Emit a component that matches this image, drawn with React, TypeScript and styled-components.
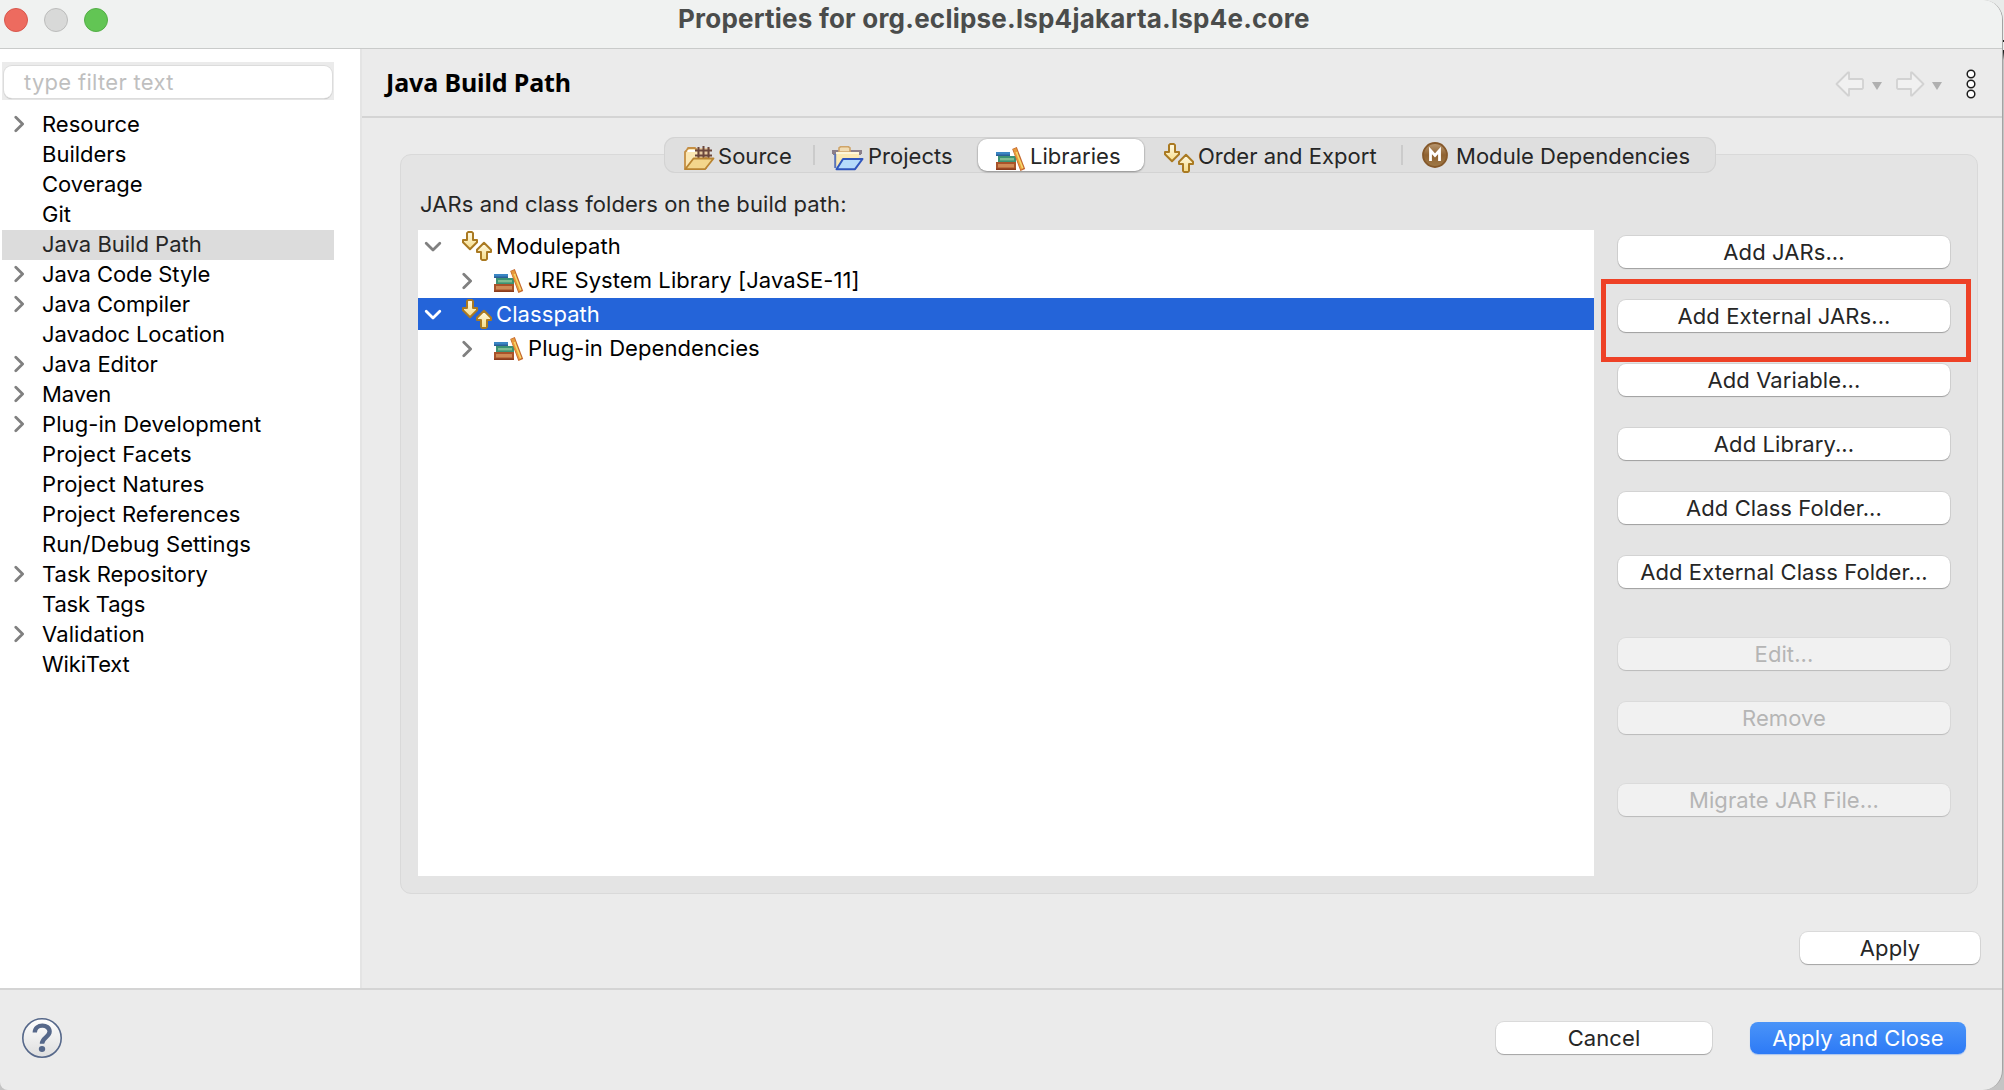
import React from "react";
import styled, { createGlobalStyle, css } from "styled-components";

const GlobalStyle = createGlobalStyle`
  *, *::before, *::after { box-sizing: border-box; }
  body { margin: 0; background: #c4c4c4; }
  svg { flex: none; display: block; }
`;

const Desktop = styled.div`
  width: 2004px;
  height: 1090px;
  overflow: hidden;
  background: linear-gradient(#e9ebea 0 40px, #222 40px 42px, #e9ebea 42px 50px, #222 50px 52px, #c4c4c4 60px);
  font-family: Inter, "Liberation Sans", sans-serif;
  font-size: 22px;
  line-height: 30px;
  letter-spacing: 0.08px;
  color: #262626;
`;

const Window = styled.div`
  width: 2003px;
  height: 1090px;
  display: flex;
  flex-direction: column;
  background: #ebebeb;
  border-right: 1px solid #a3a3a3;
  border-radius: 0 20px 20px 8px;
  overflow: hidden;
`;

const TitleBar = styled.header`
  flex: none;
  height: 49px;
  display: grid;
  grid-template-columns: 678px 1fr;
  background: #f0f2f1;
  border-bottom: 1px solid #c9cbca;
`;

const Lights = styled.div`
  display: flex;
  gap: 16px;
  padding: 8px 0 0 4px;
`;

const Light = styled.span<{ $fill: string; $rim: string }>`
  width: 24px;
  height: 24px;
  border-radius: 50%;
  background: ${(p) => p.$fill};
  border: 1px solid ${(p) => p.$rim};
`;

const Title = styled.h1`
  margin: 0;
  font-size: 26px;
  line-height: 38px;
  font-weight: 700;
  letter-spacing: 0.22px;
  color: #4a4c4b;
  white-space: nowrap;
`;

const Body = styled.div`
  flex: none;
  height: 939px;
  display: grid;
  grid-template-columns: 362px 1fr;
`;

const Sidebar = styled.nav`
  background: #fff;
  border-right: 2px solid #e4e4e4;
  padding: 13px 26px 0 2px;
`;

const FilterWrap = styled.div`
  height: 38px;
  padding: 4px 2px 2px;
  background: #ebebeb;
  margin-bottom: 10px;
`;

const Filter = styled.div`
  height: 32px;
  border-radius: 8px;
  background: #fff;
  box-shadow: 0 0 0 1px #dcdcdc, 0 1px 1px #9f9f9f;
  padding-left: 20px;
  line-height: 32px;
  letter-spacing: 0.3px;
  color: #bfbfbf;
`;

const NavRow = styled.div<{ $selected?: boolean }>`
  height: 30px;
  display: grid;
  grid-template: 28px / 40px 1fr;
  align-items: center;
  line-height: 28px;
  white-space: nowrap;
  color: ${(p) => (p.$selected ? "#262626" : "#000")};
  background: ${(p) => (p.$selected ? "#dcdcdc" : "transparent")};
`;

const NavLabel = styled.span<{ $tracking: number }>`
  letter-spacing: ${(p) => p.$tracking}px;
`;

const ChevronBox = styled.span`
  display: flex;
  align-items: center;
  padding-left: 12px;
`;

const Page = styled.main`
  display: flex;
  flex-direction: column;
`;

const PageHeader = styled.div`
  flex: none;
  height: 69px;
  display: flex;
  justify-content: space-between;
  padding: 0 26px 0 24px;
  border-bottom: 2px solid #d4d4d4;
`;

const PageTitle = styled.h2`
  margin: 0;
  font-family: "Noto Sans", "Open Sans", sans-serif;
  font-size: 25px;
  font-weight: 700;
  line-height: 66px;
  letter-spacing: -0.12px;
  color: #000;
`;

const Group = styled.section`
  flex: none;
  width: 1578px;
  height: 740px;
  margin: 36px 0 0 38px;
  background: #e4e4e4;
  border: 1px solid #d9d9d9;
  border-radius: 11px;
`;

const TabBar = styled.div`
  width: 1052px;
  height: 36px;
  margin: -18px 0 0 263px;
  display: grid;
  grid-template: 36px / 151px 163px 166px 259px 313px;
  background: #dfdfdf;
  border-radius: 11px;
  box-shadow: inset 0 0 0 1px #d3d3d3;
`;

const Tab = styled.div<{ $pad: number; $gap: number; $active?: boolean; $divider?: boolean }>`
  display: flex;
  align-items: center;
  gap: ${(p) => p.$gap}px;
  padding: 2px 0 0 ${(p) => p.$pad}px;
  white-space: nowrap;
  letter-spacing: 0.03px;
  color: #262626;
  ${(p) =>
    p.$divider &&
    css`
      background: linear-gradient(#cbcbcb, #cbcbcb) right 8px / 2px 20px no-repeat;
    `}
  ${(p) =>
    p.$active &&
    css`
      margin: 2px 0;
      background: #fff;
      border-radius: 9px;
      box-shadow: 0 0 1px 1px rgba(0, 0, 0, 0.08), 0 1px 2px rgba(0, 0, 0, 0.3);
    `}
`;

const TabIcon = styled.span<{ $top: number }>`
  align-self: flex-start;
  margin-top: ${(p) => p.$top}px;
`;

const Caption = styled.p`
  margin: 16px 0 11px 19px;
`;

const Columns = styled.div`
  display: grid;
  grid-template-columns: 1176px 332px;
  column-gap: 24px;
  padding-left: 17px;
`;

const Tree = styled.div`
  height: 646px;
  background: #fff;
  display: flex;
  flex-direction: column;
  gap: 2px;
`;

const TreeRow = styled.div<{ $selected?: boolean }>`
  flex: none;
  height: 32px;
  display: flex;
  align-items: center;
  white-space: nowrap;
  color: ${(p) => (p.$selected ? "#fff" : "#000")};
  background: ${(p) => (p.$selected ? "#2464d9" : "transparent")};
`;

const TreeToggle = styled.span<{ $pad: number; $width: number }>`
  display: flex;
  width: ${(p) => p.$width}px;
  padding: 1px 0 0 ${(p) => p.$pad}px;
`;

const TreeIcon = styled.span<{ $drop?: number }>`
  display: flex;
  width: 34px;
  padding-top: ${(p) => p.$drop ?? 0}px;
`;

const Actions = styled.div`
  display: flex;
  flex-direction: column;
  padding-top: 6px;
`;

const Button = styled.button<{ $width?: number; $top?: number; $primary?: boolean }>`
  flex: none;
  width: ${(p) => p.$width ?? 332}px;
  height: 32px;
  margin: ${(p) => p.$top ?? 0}px 0 0;
  padding: 0;
  border: 0;
  border-radius: 8px;
  font: inherit;
  line-height: 32px;
  letter-spacing: 0.08px;
  color: #262626;
  background: #fff;
  box-shadow: 0 0 0 1px rgba(0, 0, 0, 0.07), 0 1px 1px rgba(0, 0, 0, 0.25);
  &:disabled {
    color: #b5b5b5;
    background: #f1f1f1;
    box-shadow: 0 0 0 1px rgba(0, 0, 0, 0.04), 0 1px 1px rgba(0, 0, 0, 0.15);
  }
  ${(p) =>
    p.$primary &&
    css`
      color: #fff;
      background: linear-gradient(#4a94f8, #2d7af6);
      box-shadow: 0 1px 1px rgba(45, 122, 246, 0.35);
    `}
`;

const Highlighted = styled.div`
  position: relative;
  margin-top: 32px;
  height: 32px;
  &::after {
    content: "";
    position: absolute;
    left: -17.5px;
    top: -21.5px;
    width: 370px;
    height: 83px;
    border: 5px solid #ee4126;
    pointer-events: none;
  }
`;

const ApplyBar = styled.div`
  display: flex;
  justify-content: flex-end;
  padding: 38px 22px 0 0;
`;

const Footer = styled.footer`
  flex: 1;
  display: flex;
  align-items: flex-start;
  gap: 38px;
  border-top: 2px solid #d4d4d4;
  padding: 28px 36px 0 22px;
`;

const Spacer = styled.span`
  flex: 1;
`;

const Toolbar = styled.div`
  display: flex;
  align-items: center;
  padding-top: 3px;
`;

const Help = styled.div`
  width: 40px;
  height: 40px;
`;

const ChevronRight = () => (
  <svg width="12" height="18" viewBox="0 0 12 18" fill="none">
    <path d="M1.8 2.2 8.6 9l-6.8 6.8" stroke="#808080" strokeWidth="2.8" strokeLinecap="round" strokeLinejoin="round" />
  </svg>
);

const ChevronDown = ({ color }: { color: string }) => (
  <svg width="18" height="12" viewBox="0 0 18 12" fill="none">
    <path d="M2.2 2.2 9 9l6.8-6.8" stroke={color} strokeWidth="2.8" strokeLinecap="round" strokeLinejoin="round" />
  </svg>
);

const OrderIcon = () => (
  <svg width="30" height="30" viewBox="0 0 30 30">
    <defs>
      <linearGradient id="gold" x1="0" y1="0" x2="0" y2="1">
        <stop offset="0" stopColor="#fffbe9" />
        <stop offset="1" stopColor="#f6dc86" />
      </linearGradient>
    </defs>
    <g fill="url(#gold)" stroke="#aa7a22" strokeWidth="2" strokeLinejoin="round">
      <path d="M6 1.1h4l1 1V9h4v2.2l-7 7-7-7V9h4V2.1z" />
      <path d="M22 11.8l7 7V21h-4v6.9l-1 1h-4l-1-1V21h-4v-2.2z" />
    </g>
  </svg>
);

const LibraryIcon = () => (
  <svg width="30" height="25" viewBox="0 0 30 25">
    <rect x="0" y="5" width="14" height="4" fill="#3a86c4" />
    <rect x="0" y="7.5" width="14" height="1.5" fill="#2b5f96" />
    <rect x="2" y="9" width="18" height="6" fill="#3c9273" />
    <rect x="4" y="11" width="14" height="2.4" fill="#7fbd92" />
    <rect x="0" y="15" width="20" height="8" fill="#a9532a" />
    <rect x="2" y="17" width="16" height="3.5" fill="#cf8a55" />
    <rect x="0" y="21.5" width="20" height="1.5" fill="#8a3c1c" />
    <path d="M16.2 2 20.8 0 29.2 22l-4.8 2z" fill="#c4662c" />
    <path d="M17 2.3 20.2 1 22.2 6 18.9 7.3z" fill="#e59a3c" />
    <path d="M18.8 5 25.6 22.4" stroke="#ea9a3a" strokeWidth="1.8" />
    <path d="M20.4 5 26.8 21.4" stroke="#f8d869" strokeWidth="1.7" />
  </svg>
);

const SourceIcon = () => (
  <svg width="31" height="25" viewBox="0 0 31 25">
    <path d="M1 23V6l2-2 1-2h7l2 2h9v18z" fill="#fbe7b4" stroke="#c58f45" strokeWidth="1.8" strokeLinejoin="round" />
    <path d="M3.5 5h8" stroke="#fff" strokeWidth="2" />
    <path d="M13 2h13v9H13z" fill="#e7c9a0" />
    <path d="M11 4.5h17M11 9.5h17M14.5 1v11M19.5 0v12M24.5 1v11" stroke="#6b463c" strokeWidth="2" fill="none" />
    <path d="M9.5 12.5H29.5L21 23.2H1.2z" fill="#f3d68c" stroke="#b98432" strokeWidth="1.8" strokeLinejoin="round" />
  </svg>
);

const ProjectsIcon = () => (
  <svg width="32" height="25" viewBox="0 0 32 25">
    <rect x="0" y="4" width="30" height="4" fill="#8b7f8a" />
    <path d="M1 8h2M27 8h2" stroke="#8b7f8a" strokeWidth="2" />
    <path d="M7 6V2l1.5-1.2h8L18 2v4z" fill="#f0dcb4" stroke="#cfa468" strokeWidth="1.6" />
    <path d="M4 6h23v14H4z" fill="#fbe9b4" />
    <path d="M4 6h23v2H4z" fill="#fdf6da" />
    <path d="M3.2 8v14" stroke="#5a74b8" strokeWidth="2" />
    <path d="M11 13H30.5L23 23.2H4.5z" fill="#b5dbfb" stroke="#2f56bd" strokeWidth="2" strokeLinejoin="round" />
  </svg>
);

const ModuleIcon = () => (
  <svg width="26" height="26" viewBox="0 0 26 26">
    <defs>
      <linearGradient id="bronze" x1="0" y1="0" x2="0" y2="1">
        <stop offset="0" stopColor="#bb9a72" />
        <stop offset=".5" stopColor="#8f6231" />
        <stop offset="1" stopColor="#a07a48" />
      </linearGradient>
    </defs>
    <circle cx="13" cy="13" r="12" fill="url(#bronze)" stroke="#85582a" strokeWidth="1.8" />
    <path d="M8.5 19V8.5L13 13.5l4.5-5V19" fill="none" stroke="#fff" strokeWidth="2.8" />
  </svg>
);

const BackArrow = () => (
  <svg width="30" height="26" viewBox="0 0 30 26">
    <path d="M1.5 13 13 1.5h1V8h13l1 1v8l-1 1H14v6.5h-1z" fill="#f1f1f1" stroke="#d2d2d2" strokeWidth="1.8" strokeLinejoin="round" />
  </svg>
);

const ForwardArrow = () => (
  <svg width="30" height="26" viewBox="0 0 30 26">
    <path d="M28.5 13 17 1.5h-1V8H3L2 9v8l1 1h13v6.5h1z" fill="#f1f1f1" stroke="#d2d2d2" strokeWidth="1.8" strokeLinejoin="round" />
  </svg>
);

const Caret = styled.span<{ $left: number; $right: number }>`
  margin: 4px ${(p) => p.$right}px 0 ${(p) => p.$left}px;
  border: 5px solid transparent;
  border-top: 8px solid #b0b0b0;
  border-bottom: 0;
`;

const MenuDots = () => (
  <svg width="10" height="30" viewBox="0 0 10 30" fill="#fff" stroke="#1c1c1c" strokeWidth="1.5">
    <circle cx="5" cy="5" r="3.8" />
    <circle cx="5" cy="15" r="3.8" />
    <circle cx="5" cy="25" r="3.8" />
  </svg>
);

const HelpIcon = () => (
  <svg width="40" height="40" viewBox="0 0 40 40">
    <defs>
      <linearGradient id="glass" x1="0" y1="0" x2="0" y2="1">
        <stop offset="0" stopColor="#fff" />
        <stop offset="1" stopColor="#dedede" />
      </linearGradient>
    </defs>
    <circle cx="20" cy="20" r="19.2" fill="url(#glass)" stroke="#56688a" strokeWidth="1.6" />
    <path d="M12.8 14.5C12.9 5.5 27.6 5.6 27.6 13.6c0 5.8-7.6 5.4-7.6 12.2" fill="none" stroke="#56688a" strokeWidth="4.4" />
    <ellipse cx="20" cy="31" rx="3.2" ry="2.9" fill="#56688a" />
  </svg>
);

type PageEntry = { label: string; expandable?: boolean; tracking?: number };

const pages: PageEntry[] = [
  { label: "Resource", expandable: true },
  { label: "Builders" },
  { label: "Coverage" },
  { label: "Git" },
  { label: "Java Build Path" },
  { label: "Java Code Style", expandable: true, tracking: -0.08 },
  { label: "Java Compiler", expandable: true, tracking: -0.1 },
  { label: "Javadoc Location", tracking: -0.08 },
  { label: "Java Editor", expandable: true },
  { label: "Maven", expandable: true, tracking: -0.1 },
  { label: "Plug-in Development", expandable: true, tracking: 0.08 },
  { label: "Project Facets", tracking: 0.12 },
  { label: "Project Natures", tracking: 0.12 },
  { label: "Project References", tracking: 0.08 },
  { label: "Run/Debug Settings", tracking: 0.1 },
  { label: "Task Repository", expandable: true, tracking: -0.02 },
  { label: "Task Tags", tracking: -0.2 },
  { label: "Validation", expandable: true, tracking: 0.12 },
  { label: "WikiText", tracking: -0.15 },
];

const RootEntry = ({ label, selected }: { label: string; selected?: boolean }) => (
  <TreeRow $selected={selected}>
    <TreeToggle $pad={6} $width={44}>
      <ChevronDown color={selected ? "#fff" : "#808080"} />
    </TreeToggle>
    <TreeIcon>
      <OrderIcon />
    </TreeIcon>
    {label}
  </TreeRow>
);

const LibraryEntry = ({ label }: { label: string }) => (
  <TreeRow>
    <TreeToggle $pad={44} $width={76}>
      <ChevronRight />
    </TreeToggle>
    <TreeIcon $drop={3}>
      <LibraryIcon />
    </TreeIcon>
    {label}
  </TreeRow>
);

export default function App() {
  return (
    <Desktop>
      <GlobalStyle />
      <Window>
        <TitleBar>
          <Lights>
            <Light $fill="#ed6b5f" $rim="#d8574d" />
            <Light $fill="#d8d9d8" $rim="#bcbdbc" />
            <Light $fill="#62c554" $rim="#53ae46" />
          </Lights>
          <Title>Properties for org.eclipse.lsp4jakarta.lsp4e.core</Title>
        </TitleBar>
        <Body>
          <Sidebar>
            <FilterWrap>
              <Filter>type filter text</Filter>
            </FilterWrap>
            {pages.map(({ label, expandable, tracking }) => (
              <NavRow key={label} $selected={label === "Java Build Path"}>
                <ChevronBox>{expandable && <ChevronRight />}</ChevronBox>
                <NavLabel $tracking={tracking ?? 0}>{label}</NavLabel>
              </NavRow>
            ))}
          </Sidebar>
          <Page>
            <PageHeader>
              <PageTitle>Java Build Path</PageTitle>
              <Toolbar>
                <BackArrow />
                <Caret $left={7} $right={13} />
                <ForwardArrow />
                <Caret $left={7} $right={24} />
                <MenuDots />
              </Toolbar>
            </PageHeader>
            <Group>
              <TabBar>
                <Tab $pad={20} $gap={3} $divider>
                  <TabIcon $top={7}>
                    <SourceIcon />
                  </TabIcon>
                  Source
                </Tab>
                <Tab $pad={17} $gap={4}>
                  <TabIcon $top={7}>
                    <ProjectsIcon />
                  </TabIcon>
                  Projects
                </Tab>
                <Tab $pad={18} $gap={4} $active>
                  <TabIcon $top={6}>
                    <LibraryIcon />
                  </TabIcon>
                  Libraries
                </Tab>
                <Tab $pad={20} $gap={4} $divider>
                  <TabIcon $top={4}>
                    <OrderIcon />
                  </TabIcon>
                  Order and Export
                </Tab>
                <Tab $pad={19} $gap={8}>
                  <TabIcon $top={3}>
                    <ModuleIcon />
                  </TabIcon>
                  Module Dependencies
                </Tab>
              </TabBar>
              <Caption>JARs and class folders on the build path:</Caption>
              <Columns>
                <Tree>
                  <RootEntry label="Modulepath" />
                  <LibraryEntry label="JRE System Library [JavaSE-11]" />
                  <RootEntry label="Classpath" selected />
                  <LibraryEntry label="Plug-in Dependencies" />
                </Tree>
                <Actions>
                  <Button>Add JARs...</Button>
                  <Highlighted>
                    <Button>Add External JARs...</Button>
                  </Highlighted>
                  <Button $top={32}>Add Variable...</Button>
                  <Button $top={32}>Add Library...</Button>
                  <Button $top={32}>Add Class Folder...</Button>
                  <Button $top={32}>Add External Class Folder...</Button>
                  <Button $top={50} disabled>Edit...</Button>
                  <Button $top={32} disabled>Remove</Button>
                  <Button $top={50} disabled>Migrate JAR File...</Button>
                </Actions>
              </Columns>
            </Group>
            <ApplyBar>
              <Button $width={180}>Apply</Button>
            </ApplyBar>
          </Page>
        </Body>
        <Footer>
          <Help>
            <HelpIcon />
          </Help>
          <Spacer />
          <Button $width={216} $top={4}>Cancel</Button>
          <Button $width={216} $top={4} $primary>Apply and Close</Button>
        </Footer>
      </Window>
    </Desktop>
  );
}
